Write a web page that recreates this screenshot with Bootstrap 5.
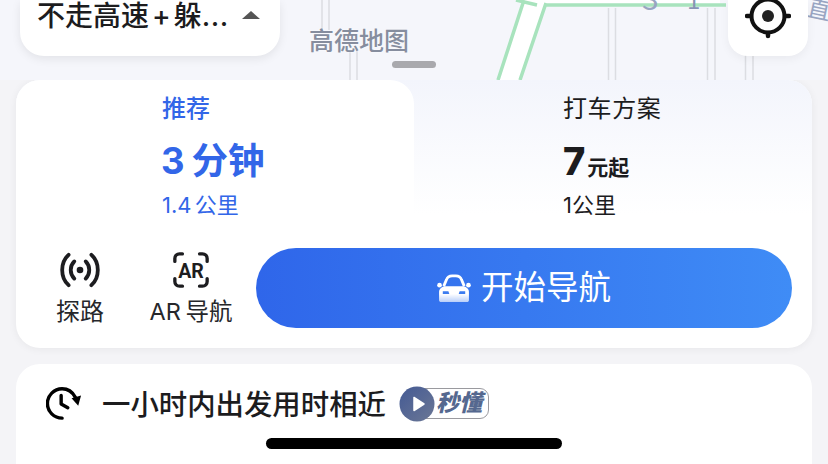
<!DOCTYPE html>
<html lang="zh-CN">
<head>
    <meta charset="UTF-8">
    <meta name="viewport" content="width=device-width, initial-scale=1.0">
    <title>高德地图</title>
    <link href="https://cdn.jsdelivr.net/npm/bootstrap@5.3.0/dist/css/bootstrap.min.css" rel="stylesheet">
    <style>
        body {
            width: 828px;
            height: 464px;
            overflow: hidden;
            background-color: #f4f4f7;
            font-family: "Inter", "Noto Sans CJK SC", sans-serif;
            color: #1c1c1e;
        }
        .map-area {
            height: 80px;
            background-color: #f5f6fb;
        }
        .map-lines {
            position: absolute;
            left: 0;
            top: 0;
        }
        .map-lines text {
            font-family: "Noto Sans CJK SC", sans-serif;
        }
        .top-bar {
            padding: 0 20px;
            height: 56px;
        }
        .route-chip {
            width: 260px;
            height: 56px;
            padding: 0 20px 24px 17px;
            background: #fff;
            border-radius: 0 0 24px 24px;
            box-shadow: 0 3px 10px rgba(0, 0, 0, 0.08);
            font-size: 28px;
            line-height: 30px;
            font-weight: 500;
            white-space: nowrap;
        }
        .chip-plus {
            margin: 0 3px;
        }
        .chip-dots {
            letter-spacing: 0.5px;
        }
        .chip-arrow {
            width: 0;
            height: 0;
            border-left: 9px solid transparent;
            border-right: 9px solid transparent;
            border-bottom: 8px solid #555;
            margin-bottom: 2px;
        }
        .locate-btn {
            width: 80px;
            height: 56px;
            background: #fff;
            border-radius: 0 0 20px 20px;
            box-shadow: 0 3px 10px rgba(0, 0, 0, 0.05);
        }
        .map-logo {
            position: absolute;
            left: 309px;
            top: 21px;
            font-family: "Noto Sans CJK SC", sans-serif;
            font-size: 25px;
            font-weight: 500;
            line-height: 36px;
            color: #868d9e;
            text-shadow: 0 0 2px #fff;
        }
        .grab-handle {
            position: absolute;
            left: 392px;
            top: 61px;
            width: 44px;
            height: 7px;
            border-radius: 4px;
            background: #a9a9ad;
        }
        .route-panel {
            margin: 0 16px;
            height: 268px;
            background: #fff;
            border-radius: 24px;
            box-shadow: 0 1px 8px rgba(0, 0, 0, 0.06);
            overflow: hidden;
        }
        .tab-row {
            height: 150px;
            background: linear-gradient(180deg, #f3f5fc 0%, #ffffff 90%);
        }
        .route-tab {
            flex: 0 0 398px;
            padding: 12px 0 0 146px;
            background: #fff;
            border-radius: 0 24px 0 0;
        }
        .route-tab-alt {
            flex: 1 1 auto;
            padding: 12px 0 0 149px;
        }
        .tab-label {
            font-size: 24px;
            line-height: 34px;
        }
        .route-tab-alt .tab-label {
            letter-spacing: 0.6px;
        }
        .tab-active {
            color: #3266e8;
        }
        .tab-label.tab-active {
            font-weight: 500;
        }
        .tab-time {
            font-size: 36.5px;
            line-height: 50px;
            margin-top: 10px;
            margin-left: -1px;
            font-weight: 700;
            white-space: nowrap;
        }
        .tab-time span {
            margin-right: 7px;
        }
        .tab-dist {
            font-size: 22px;
            line-height: 30px;
            margin-top: 4px;
            word-spacing: -3px;
        }
        .route-tab-alt .tab-dist {
            margin-top: -3px;
        }
        .tab-price {
            line-height: 50px;
            margin-top: 10px;
            font-weight: 700;
            font-size: 21px;
        }
        .tab-price b {
            font-size: 38px;
            font-weight: 800;
            margin-right: 2px;
        }
        .action-row {
            padding: 18px 20px 0 24px;
        }
        .tool-item {
            font-size: 24px;
            line-height: 28px;
            text-align: center;
            white-space: nowrap;
            color: #26272b;
        }
        .tool-probe {
            width: 80px;
        }
        .tool-ar {
            width: 100px;
            margin: 0 15px 0 21px;
            font-size: 23.5px;
            word-spacing: -2px;
        }
        .tool-item svg {
            display: block;
            margin: 3px auto 9px;
        }
        .nav-start {
            flex: 1 1 auto;
            height: 80px;
            border: 0;
            border-radius: 40px;
            background: linear-gradient(90deg, #2f66ea 0%, #3f8cf6 100%);
            color: #fff;
            font-size: 32.5px;
            line-height: 80px;
        }
        .car-icon {
            margin-right: 10px;
        }
        .tip-card {
            margin: 16px 16px 0;
            height: 110px;
            padding: 20px 30px;
            background: #fff;
            border-radius: 24px 24px 0 0;
        }
        .tip-title {
            font-size: 28.4px;
            line-height: 40px;
            font-weight: 500;
            margin: 1px 13px 0 20px;
            white-space: nowrap;
        }
        .mini-badge {
            position: relative;
            width: 90px;
            height: 36px;
            margin-top: 2px;
        }
        .mini-pill {
            position: absolute;
            left: 10px;
            top: 2px;
            width: 80px;
            height: 31px;
            border: 1px solid #9a9a9f;
            border-radius: 9px;
            padding-left: 26px;
            font-size: 23px;
            line-height: 28px;
            font-weight: 900;
            font-style: italic;
            color: #55688f;
            white-space: nowrap;
        }
        .mini-play {
            position: absolute;
            left: 0;
            top: 0;
        }
        .home-bar {
            position: absolute;
            left: 266px;
            top: 438px;
            width: 296px;
            height: 11px;
            background: #000;
            border-radius: 6px;
        }
    </style>
</head>
<body>
    <div class="map-area position-relative">
        <svg class="map-lines" width="828" height="80" viewBox="0 0 828 80" fill="none">
            <!-- grey roads -->
            <g stroke="#dcdde2" stroke-width="1.5">
                <path d="M322 -2V30M329 -2V30M350 50V82M357 50V82"/>
                <path d="M608.500 8V82M615.500 8V82M707.500 8V82M715 8V82M745.500 50V82M753 50V82"/>
            </g>
            <!-- green route roads -->
            <path d="M522 0L500 80H520L546 5H720V0Z" fill="#ffffff"/>
            <g stroke="#a8e3bd" stroke-width="3.500">
                <path d="M524 0L498 80M546 3L520 80M544 5H726M516 0L537 5"/>
            </g>
            <text x="642" y="10" font-size="30" fill="#99a5c2">3</text>
            <text x="687" y="9" font-size="24" fill="#8795b5">1</text>
            <text x="807" y="18" font-size="24" fill="#99a5c2" transform="rotate(12 818 10)">直</text>
        </svg>
        <div class="top-bar position-relative d-flex justify-content-between align-items-start">
            <div class="route-chip d-flex align-items-center justify-content-between">
                <span>不走高速<span class="chip-plus">+</span>躲<span class="chip-dots">...</span></span>
                <span class="chip-arrow"></span>
            </div>
            <div class="locate-btn d-flex justify-content-center">
                <svg width="46" height="40" viewBox="0 0 46 40" fill="none">
                    <circle cx="23" cy="16" r="16.500" stroke="#111" stroke-width="4"/>
                    <circle cx="23" cy="16" r="6" fill="#222"/>
                    <path d="M2 16H6M40 16H44M23 33V36" stroke="#111" stroke-width="4.500" stroke-linecap="round"/>
                </svg>
            </div>
        </div>
        <div class="map-logo">高德地图</div>
        <div class="grab-handle"></div>
    </div>

    <div class="route-panel">
        <div class="tab-row d-flex">
            <div class="route-tab">
                <div class="tab-label tab-active">推荐</div>
                <div class="tab-time tab-active"><span>3</span>分钟</div>
                <div class="tab-dist tab-active">1.4 公里</div>
            </div>
            <div class="route-tab-alt">
                <div class="tab-label">打车方案</div>
                <div class="tab-price"><b>7</b>元起</div>
                <div class="tab-dist">1公里</div>
            </div>
        </div>
        <div class="action-row d-flex align-items-start">
            <div class="tool-item tool-probe">
                <svg width="42" height="38" viewBox="0 0 44 40" fill="none" stroke="#1d1d20" stroke-width="4" stroke-linecap="round">
                    <path d="M10 4C1 12 1 28 10 36M34 4C43 12 43 28 34 36"/>
                    <path d="M16 11C11 16 11 24 16 29M28 11C33 16 33 24 28 29"/>
                    <circle cx="22" cy="20" r="3.500" fill="#1d1d20" stroke="none"/>
                </svg>
                <span>探路</span>
            </div>
            <div class="tool-item tool-ar">
                <svg width="38" height="38" viewBox="0 0 40 40" fill="none">
                    <path d="M11 3H8C5 3 3 5 3 8V11M29 3H32C35 3 37 5 37 8V11M3 29V32C3 35 5 37 8 37H11M37 29V32C37 35 35 37 32 37H29" stroke="#1d1d20" stroke-width="3.500" stroke-linecap="round"/>
                    <text x="20" y="28" text-anchor="middle" font-family="Roboto, sans-serif" font-size="22" font-weight="700" fill="#1d1d20" textLength="27" lengthAdjust="spacingAndGlyphs">AR</text>
                </svg>
                <span>AR 导航</span>
            </div>
            <button type="button" class="nav-start btn d-flex align-items-center justify-content-center">
                <svg class="car-icon" width="34" height="28" viewBox="0 0 36 30" fill="none">
                    <defs>
                        <linearGradient id="carFade" x1="0" y1="0" x2="0" y2="1">
                            <stop offset="0.5" stop-color="#fff"/>
                            <stop offset="1" stop-color="#fff" stop-opacity="0.65"/>
                        </linearGradient>
                    </defs>
                    <circle cx="2.500" cy="12" r="2.500" fill="#fff"/>
                    <circle cx="33.500" cy="12" r="2.500" fill="#fff"/>
                    <path d="M7 13L10 6C11 3 13 2 16 2H20C23 2 25 3 26 6L29 13" stroke="#fff" stroke-width="3"/>
                    <path d="M2 28V19C2 15 6 13 9 13H27C30 13 34 15 34 19V28C34 29 33 30 32 30H4C3 30 2 29 2 28Z" fill="url(#carFade)"/>
                    <path d="M6 18.500H12L13 21.500H6ZM30 18.500H24L23 21.500H30Z" fill="#3b7cf0"/>
                </svg>
                <span>开始导航</span>
            </button>
        </div>
    </div>

    <div class="tip-card d-flex align-items-start">
        <svg width="36" height="38" viewBox="0 0 38 38" fill="none">
            <path d="M17 35C8.500 35 1.500 28 1.500 19.500S8.500 4 17 4C23 4 28 7.500 31 13" stroke="#000" stroke-width="3.600" stroke-linecap="round"/>
            <path d="M27 14L37 11L34 22Z" fill="#000"/>
            <path d="M16 11V20L23 24" stroke="#000" stroke-width="3.600" stroke-linecap="round" stroke-linejoin="round"/>
        </svg>
        <span class="tip-title">一小时内出发用时相近</span>
        <div class="mini-badge">
            <div class="mini-pill">秒懂</div>
            <svg class="mini-play" width="36" height="36" viewBox="0 0 36 36">
                <defs>
                    <linearGradient id="playFill" x1="0" y1="0" x2="1" y2="1">
                        <stop offset="0" stop-color="#445a94"/>
                        <stop offset="1" stop-color="#6b7795"/>
                    </linearGradient>
                </defs>
                <circle cx="18" cy="18" r="17.500" fill="url(#playFill)"/>
                <path d="M15 11.500V24.500L25 18Z" fill="#fff" stroke="#fff" stroke-width="1.500" stroke-linejoin="round"/>
            </svg>
        </div>
    </div>
    <div class="home-bar"></div>

    <script src="https://cdn.jsdelivr.net/npm/bootstrap@5.3.0/dist/js/bootstrap.bundle.min.js"></script>
</body>
</html>
